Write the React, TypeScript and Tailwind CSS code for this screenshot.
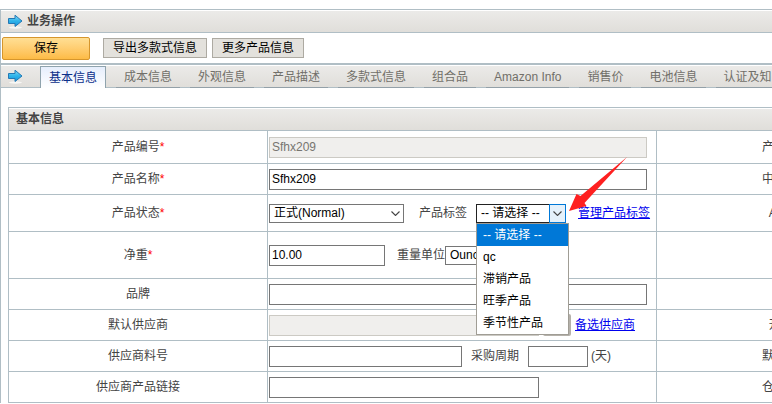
import type { ReactNode } from 'react'

const TABS = ['基本信息', '成本信息', '外观信息', '产品描述', '多款式信息', '组合品', 'Amazon Info', '销售价', '电池信息', '认证及知']

const TAG_OPTIONS = ['-- 请选择 --', 'qc', '滞销产品', '旺季产品', '季节性产品']

const INPUT = 'h-[21px] border border-[#767676] bg-white px-0.5 text-black'
const DISABLED = 'h-[21px] border border-[#cccac4] bg-[#f0efed] px-0.5 text-[#777570]'
const SELECT = 'h-[19px] appearance-none border border-[#767676] bg-white px-1 text-black'
const BAR = 'border-[#b0bec5] bg-linear-to-b from-[#ecebe9] to-[#e0deda] shadow-[inset_0_1px_0_#ffffff]'

function ArrowIcon() {
  return (
    <svg className="h-4 w-4 shrink-0" viewBox="0 0 16 16" aria-hidden="true">
      <defs>
        <linearGradient id="arrow" x1="0" y1="0" x2="0" y2="1">
          <stop offset="0" stopColor="#8adcf5" />
          <stop offset="0.5" stopColor="#2fb4ea" />
          <stop offset="1" stopColor="#1795dc" />
        </linearGradient>
      </defs>
      <ellipse cx="8.5" cy="14.5" rx="6.5" ry="1.2" fill="#f7f7f5" />
      <path d="M1.5 5.5h6.5V2.2L15 8 8 13.5v-3H1.5z" fill="url(#arrow)" stroke="#2478b4" strokeLinejoin="round" />
    </svg>
  )
}

function Chevron() {
  return (
    <svg className="h-[5px] w-[9px]" viewBox="0 0 9 5" fill="none" aria-hidden="true">
      <path d="M0.5 0.5l4 4 4-4" stroke="#444444" strokeWidth="1.1" />
    </svg>
  )
}

function Row({ id, label, required, height, side, children }: {
  id: string
  label: string
  required?: boolean
  height: string
  side?: string
  children: ReactNode
}) {
  return (
    <tr className={height}>
      <th className="border border-[#b0bec5] p-0 text-center font-normal">
        <label htmlFor={id}>{label}{required && <span className="text-[#ff0000]">*</span>}</label>
      </th>
      <td className="border border-[#b0bec5] p-0 pl-px">
        <div className="flex items-center whitespace-nowrap">{children}</div>
      </td>
      <th className="border border-[#b0bec5] p-0 pl-[105px] text-left font-normal whitespace-nowrap">{side}</th>
    </tr>
  )
}

export default function App() {
  return (
    <div className="overflow-hidden bg-white pt-[9px] font-['Liberation_Sans','Noto_Sans_CJK_SC',sans-serif] text-xs leading-4 text-[#444444]">
      <div className="border-l border-[#b0bec5]">
        <header className={`flex h-6 items-center gap-1 border-y pl-1.5 ${BAR}`}>
          <ArrowIcon />
          <h1 className="font-bold">业务操作</h1>
        </header>

        <div className="flex h-[30px] items-center pl-px">
          <button className="h-[23px] w-[88px] rounded-xs border border-[#d6962c] bg-linear-to-b from-[#ffdf94] to-[#fdbb45] text-black">保存</button>
          <button className="ml-[13px] h-5 border border-[#adaaa2] bg-[#e3e1dc] px-[9px] leading-4 text-black">导出多款式信息</button>
          <button className="ml-[5px] h-5 border border-[#adaaa2] bg-[#e3e1dc] px-[9px] leading-4 text-black">更多产品信息</button>
        </div>

        <nav className={`flex h-[25px] items-end border-t-2 border-b pl-1.5 ${BAR}`}>
          <div className="flex h-full items-center"><ArrowIcon /></div>
          <div className="-mb-px ml-[17px] flex gap-2.5" role="tablist">
            {TABS.map((tab, i) => (
              <button
                key={tab}
                role="tab"
                aria-selected={i === 0}
                className={i === 0
                  ? 'h-[22px] shrink-0 border border-b-0 border-[#8fa3ad] bg-linear-to-b from-[#e6eefc] to-white px-2 text-[#0b2f8a]'
                  : 'h-[22px] shrink-0 border-b border-[#93a0a8] px-2 text-[#716f69]'}
              >
                {tab}
              </button>
            ))}
          </div>
        </nav>

        <main className="pt-[19px] pl-[7px]">
          <h2 className={`flex h-[23px] items-center border-t border-l pl-[7px] font-bold ${BAR}`}>基本信息</h2>
          {/* the third column runs on past the right edge of a narrow window */}
          <table className="w-full min-w-[907px] table-fixed border-collapse">
            <colgroup>
              <col className="w-[259px]" />
              <col className="w-[389px]" />
              <col />
            </colgroup>
            <tbody>
              <Row id="code" label="产品编号" required height="h-[33px]" side="产">
                <input id="code" disabled defaultValue="Sfhx209" className={`w-[378px] ${DISABLED}`} />
              </Row>
              <Row id="name" label="产品名称" required height="h-[31px]" side="中">
                <input id="name" defaultValue="Sfhx209" className={`w-[378px] ${INPUT}`} />
              </Row>
              <Row id="status" label="产品状态" required height="h-[37px]" side="&nbsp;&nbsp;A">
                <div className="relative">
                  <select id="status" className={`block w-[135px] ${SELECT}`}>
                    <option>正式(Normal)</option>
                  </select>
                  <span className="pointer-events-none absolute inset-y-0 right-1 flex items-center"><Chevron /></span>
                </div>
                <label htmlFor="tag" className="ml-[15px]">产品标签</label>
                <div className="relative ml-[9px]">
                  <select id="tag" className="block h-[19px] w-[90px] appearance-none border border-[#222222] bg-white px-1 text-black">
                    {TAG_OPTIONS.map(o => <option key={o}>{o}</option>)}
                  </select>
                  <span className="pointer-events-none absolute inset-y-0 right-0 flex w-[17px] items-center justify-center border border-[#0078d7] bg-[#e5f1fb]"><Chevron /></span>
                  <ul className="absolute top-full left-0 z-10 w-[93px] border border-[#a09d95] bg-white text-black">
                    {TAG_OPTIONS.map((o, i) => (
                      <li key={o} className={i === 0 ? 'bg-[#0078d7] px-1.5 leading-[22px] text-white' : 'px-1.5 leading-[22px]'}>{o}</li>
                    ))}
                  </ul>
                  {/* pointer to the tag drop-down */}
                  <svg className="pointer-events-none absolute bottom-3 left-[93px] z-20 h-[54px] w-[58px]" viewBox="0 0 58 54" aria-hidden="true">
                    <path d="M0 54L7.5 37l4 2L58 0 15.5 46l2 3z" fill="#fe2020" />
                  </svg>
                </div>
                <a href="#tags" className="ml-3 text-[#0000ee] underline">管理产品标签</a>
              </Row>
              <Row id="weight" label="净重" required height="h-[47px]">
                <input id="weight" defaultValue="10.00" className={`w-[116px] ${INPUT}`} />
                <label htmlFor="unit" className="ml-3">重量单位</label>
                <select id="unit" className={`w-20 ${SELECT}`}>
                  <option>Ounce</option>
                </select>
              </Row>
              <Row id="brand" label="品牌" height="h-[31px]">
                <input id="brand" className={`w-[378px] ${INPUT}`} />
              </Row>
              <Row id="supplier" label="默认供应商" height="h-[31px]" side="&nbsp;&nbsp;开">
                <input id="supplier" disabled className={`w-[270px] ${DISABLED}`} />
                <button aria-label="选择" className="ml-1 h-[22px] w-7 rounded-xs border-2 border-[#b5b1aa] bg-[#f4f3f1]" />
                <a href="#suppliers" className="ml-1 text-[#0000ee] underline">备选供应商</a>
              </Row>
              <Row id="sku" label="供应商料号" height="h-[31px]" side="默">
                <input id="sku" className={`w-[193px] ${INPUT}`} />
                <label htmlFor="cycle" className="ml-[9px]">采购周期</label>
                <input id="cycle" className={`ml-[9px] w-[60px] ${INPUT}`} />
                <span className="ml-[3px]">(天)</span>
              </Row>
              <Row id="link" label="供应商产品链接" height="h-[31px]" side="仓">
                <input id="link" className={`w-[270px] ${INPUT}`} />
              </Row>
            </tbody>
          </table>
        </main>
      </div>
    </div>
  )
}
